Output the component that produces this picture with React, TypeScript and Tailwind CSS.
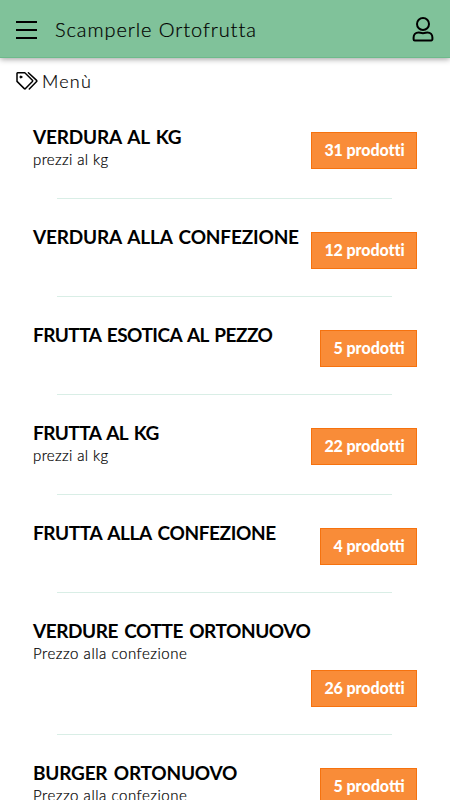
import React from 'react';

const categories = [
  { name: 'VERDURA AL KG', note: 'prezzi al kg', count: 31, spacing: 'tracking-[-0.19px]', wrap: false },
  { name: 'VERDURA ALLA CONFEZIONE', note: '', count: 12, spacing: 'tracking-[-0.17px]', wrap: false },
  { name: 'FRUTTA ESOTICA AL PEZZO', note: '', count: 5, spacing: 'tracking-[-0.54px]', wrap: false },
  { name: 'FRUTTA AL KG', note: 'prezzi al kg', count: 22, spacing: 'tracking-[-0.54px]', wrap: false },
  { name: 'FRUTTA ALLA CONFEZIONE', note: '', count: 4, spacing: 'tracking-[-0.38px]', wrap: false },
  { name: 'VERDURE COTTE ORTONUOVO', note: 'Prezzo alla confezione', count: 26, spacing: 'tracking-[-0.43px]', wrap: true },
  { name: 'BURGER ORTONUOVO', note: 'Prezzo alla confezione', count: 5, spacing: 'tracking-[-0.2px]', wrap: false },
];

function TagsIcon() {
  return (
    <svg width="22" height="18" viewBox="0 0 22 18" fill="none" stroke="black" strokeWidth="1.5" strokeLinejoin="round" strokeLinecap="round">
      <path d="M1 1.3a.5.5 0 0 1 .5-.5h7.3l7.6 7.4a.9.9 0 0 1 0 1.2l-6.9 7.2a.9.9 0 0 1-1.2 0L1 9.4z" />
      <path d="M12.4.8l8.2 7.6a.8.8 0 0 1 0 1.1L13.3 17" />
      <circle cx="4.9" cy="5" r="1" fill="black" strokeWidth="1" />
    </svg>
  );
}

function UserIcon() {
  return (
    <svg width="22" height="25" viewBox="0 0 22 25" fill="none" stroke="black" strokeWidth="2" strokeLinejoin="round">
      <circle cx="11" cy="7" r="6" />
      <path d="M6.6 15.4c1.6 0 2.2.8 4.4.8s2.8-.8 4.4-.8c3.2 0 5 2.4 5 5.2v1.7a1.2 1.2 0 0 1-1.2 1.2H2.8a1.2 1.2 0 0 1-1.2-1.2v-1.7c0-2.8 1.8-5.2 5-5.2z" />
    </svg>
  );
}

export default function App() {
  return (
    <div className="h-[800px] overflow-hidden bg-white text-black font-['Lato',sans-serif]">
      {/* Header */}
      <header className="relative h-[58px] flex items-center pl-4 pr-4 bg-[#80c29a] border-b border-[#6dba8b] shadow-[0_1px_6px_rgba(0,0,0,0.4)]">
        <button className="w-[21px] pt-[2px] flex flex-col gap-[6px]">
          <span className="h-[2px] bg-black" />
          <span className="h-[2px] bg-black" />
          <span className="h-[2px] bg-black" />
        </button>
        <h1 className="ml-[18px] flex-1 text-[20px] leading-6 font-light tracking-[0.92px] whitespace-nowrap [-webkit-text-stroke:0.2px_black]">
          Scamperle Ortofrutta
        </h1>
        <button className="pt-[2px]">
          <UserIcon />
        </button>
      </header>

      <div className="flex items-center h-[46px] pl-4 gap-1">
        <TagsIcon />
        <span className="text-[18px] leading-6 font-light tracking-[1.2px] [-webkit-text-stroke:0.2px_black]">Menù</span>
      </div>

      {/* Categories */}
      <div className="mt-[-5px] px-[33px]">
        {categories.map((c) => (
          <section key={c.name}>
            <div className={c.wrap ? 'pt-[26px] pb-[27px]' : 'flex justify-between items-start pt-[26px] pb-[27px]'}>
              <div className={c.note ? 'h-[46px]' : 'h-[44px]'}>
                <h2 className={`text-[19px] leading-6 font-bold whitespace-nowrap [word-spacing:2px] ${c.spacing}`}>{c.name}</h2>
                {c.note && (
                  <p
                    className={`text-[15px] leading-[21px] font-light whitespace-nowrap [-webkit-text-stroke:0.2px_black] ${
                      c.note[0] === 'P' ? 'tracking-[0.54px]' : 'tracking-[0.36px]'
                    }`}
                  >
                    {c.note}
                  </p>
                )}
              </div>
              <div className={c.wrap ? 'flex justify-end mt-[5px]' : 'mt-[7px]'}>
                <button
                  className={`h-[37px] border border-[#f6720e] bg-[#f98c38] text-white text-[16px] leading-[34px] pb-px font-black whitespace-nowrap ${
                    c.count > 9 ? 'w-[106px] pl-px tracking-[-0.08px]' : 'w-[97px] pl-px'
                  }`}
                >
                  {c.count} prodotti
                </button>
              </div>
            </div>
            <hr className="ml-6 mr-[25px] border-0 h-px bg-[#d9eee6]" />
          </section>
        ))}
      </div>
    </div>
  );
}
